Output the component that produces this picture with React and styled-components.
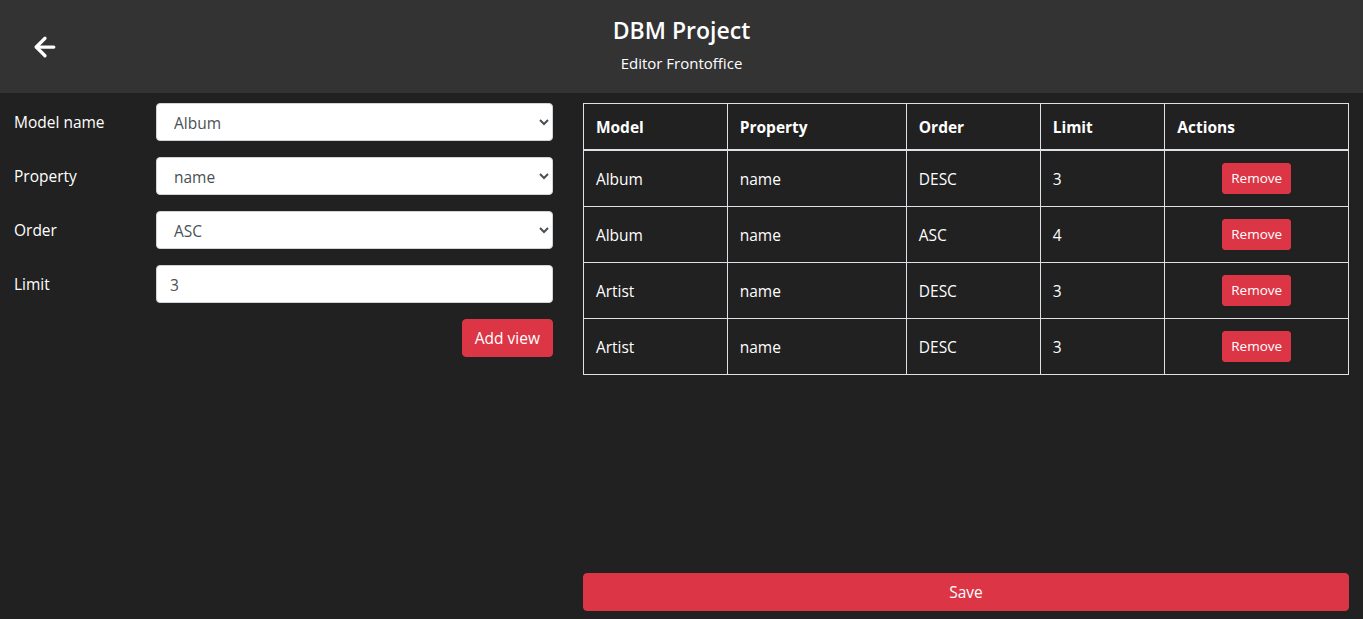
import React, { useState } from "react";
import styled, { createGlobalStyle } from "styled-components";
import { ArrowLeft } from "lucide-react";

const GlobalStyle = createGlobalStyle`
  * { box-sizing: border-box; }
  html, body {
    margin: 0;
    padding: 0;
    background: #212121;
    color: #ffffff;
    font-family: "Open Sans", "Noto Sans", sans-serif;
    font-size: 16px;
  }
`;

const Page = styled.div`
  min-height: 100vh;
  display: flex;
  flex-direction: column;
`;

const Header = styled.header`
  height: 93px;
  background: #333333;
  display: grid;
  grid-template-columns: 1fr auto 1fr;
  align-items: center;
`;

const BackButton = styled.button`
  justify-self: start;
  margin-left: 30px;
  background: none;
  border: none;
  padding: 0;
  color: #ffffff;
  display: flex;
  cursor: pointer;
`;

const TitleBlock = styled.div`
  display: flex;
  flex-direction: column;
  align-items: center;
  gap: 8px;
  margin-top: -2px;
`;

const Title = styled.h1`
  margin: 0;
  font-size: 23px;
  font-weight: 600;
  line-height: 1.2;
`;

const Subtitle = styled.div`
  font-size: 15px;
  line-height: 1.4;
`;

const Main = styled.main`
  flex: 1;
  display: grid;
  grid-template-columns: 5fr 7fr;
`;

const FormColumn = styled.section`
  padding: 10px 15px 10px 0;
`;

const FormRow = styled.div`
  display: flex;
  align-items: center;
  margin-bottom: 16px;
`;

const Label = styled.label`
  width: 156px;
  padding-left: 14px;
  font-size: 15.5px;
`;

const fieldCss = `
  flex: 1;
  height: 38px;
  border: 1px solid #ced4da;
  border-radius: 4px;
  background: #ffffff;
  color: #495057;
  font-family: "Open Sans", "Noto Sans", sans-serif;
  font-size: 15.5px;
`;

const Select = styled.select`
  ${fieldCss}
  padding: 1px 8px 0 13px;
`;

const Input = styled.input`
  ${fieldCss}
  padding: 1px 13px 0;
`;

const Actions = styled.div`
  display: flex;
  justify-content: flex-end;
`;

const DangerButton = styled.button`
  background: #dc3545;
  color: #ffffff;
  border: 1px solid #dc3545;
  border-radius: ${(p) => (p.$small ? "3px" : "4px")};
  font-family: "Open Sans", "Noto Sans", sans-serif;
  font-size: ${(p) => (p.$small ? "13.5px" : "15.5px")};
  line-height: ${(p) => (p.$small ? "21px" : "24px")};
  padding: ${(p) => (p.$small ? "4px 8px" : "6px 12px")};
  width: ${(p) => (p.$block ? "100%" : "auto")};
  cursor: pointer;
`;

const TableColumn = styled.section`
  padding: 10px 14px 8px 15px;
  display: flex;
  flex-direction: column;
`;

const Table = styled.table`
  width: 100%;
  border-collapse: collapse;
  border: 1px solid #dee2e6;
  color: #ffffff;
`;

const Th = styled.th`
  width: ${(p) => p.$w};
  text-align: left;
  padding: 13px 12px 11px;
  font-weight: 700;
  font-size: 15.5px;
  line-height: 21px;
  border: 1px solid #dee2e6;
  border-bottom-width: 2px;
`;

const Td = styled.td`
  padding: 12px 12px 11px;
  font-size: 15.5px;
  vertical-align: middle;
  text-align: ${(p) => (p.$center ? "center" : "left")};
  border: 1px solid #dee2e6;
  height: 56px;
`;

const Spacer = styled.div`
  flex: 1;
`;

const columns = [
  { label: "Model", w: "18.8%" },
  { label: "Property", w: "23.4%" },
  { label: "Order", w: "17.5%" },
  { label: "Limit", w: "16.3%" },
  { label: "Actions", w: "24%" },
];

const initialViews = [
  { model: "Album", property: "name", order: "DESC", limit: 3 },
  { model: "Album", property: "name", order: "ASC", limit: 4 },
  { model: "Artist", property: "name", order: "DESC", limit: 3 },
  { model: "Artist", property: "name", order: "DESC", limit: 3 },
];

export default function App() {
  const [views, setViews] = useState(initialViews);
  const [model, setModel] = useState("Album");
  const [property, setProperty] = useState("name");
  const [order, setOrder] = useState("ASC");
  const [limit, setLimit] = useState("3");

  const addView = () =>
    setViews([...views, { model, property, order, limit: Number(limit) }]);

  return (
    <Page>
      <GlobalStyle />
      <Header>
        <BackButton aria-label="Back">
          <ArrowLeft size={30} strokeWidth={2.6} />
        </BackButton>
        <TitleBlock>
          <Title>DBM Project</Title>
          <Subtitle>Editor Frontoffice</Subtitle>
        </TitleBlock>
        <div />
      </Header>
      <Main>
        <FormColumn>
          <FormRow>
            <Label>Model name</Label>
            <Select value={model} onChange={(e) => setModel(e.target.value)}>
              <option>Album</option>
              <option>Artist</option>
            </Select>
          </FormRow>
          <FormRow>
            <Label>Property</Label>
            <Select value={property} onChange={(e) => setProperty(e.target.value)}>
              <option>name</option>
            </Select>
          </FormRow>
          <FormRow>
            <Label>Order</Label>
            <Select value={order} onChange={(e) => setOrder(e.target.value)}>
              <option>ASC</option>
              <option>DESC</option>
            </Select>
          </FormRow>
          <FormRow>
            <Label>Limit</Label>
            <Input value={limit} onChange={(e) => setLimit(e.target.value)} />
          </FormRow>
          <Actions>
            <DangerButton onClick={addView}>Add view</DangerButton>
          </Actions>
        </FormColumn>
        <TableColumn>
          <Table>
            <thead>
              <tr>
                {columns.map((c) => (
                  <Th key={c.label} $w={c.w}>
                    {c.label}
                  </Th>
                ))}
              </tr>
            </thead>
            <tbody>
              {views.map((v, i) => (
                <tr key={i}>
                  <Td>{v.model}</Td>
                  <Td>{v.property}</Td>
                  <Td>{v.order}</Td>
                  <Td>{v.limit}</Td>
                  <Td $center>
                    <DangerButton
                      $small
                      onClick={() => setViews(views.filter((_, j) => j !== i))}
                    >
                      Remove
                    </DangerButton>
                  </Td>
                </tr>
              ))}
            </tbody>
          </Table>
          <Spacer />
          <DangerButton $block>Save</DangerButton>
        </TableColumn>
      </Main>
    </Page>
  );
}
